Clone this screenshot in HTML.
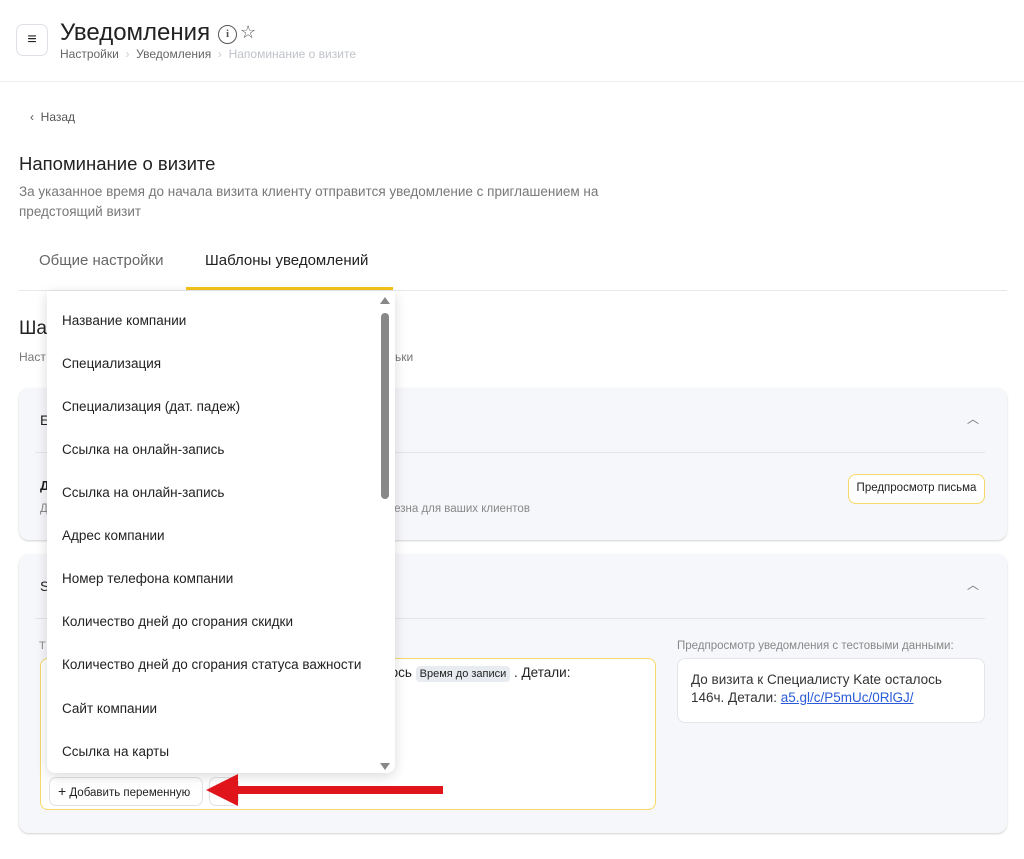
<!DOCTYPE html><html><head><meta charset="utf-8"><style>
*{box-sizing:border-box;margin:0;padding:0}
body{width:1024px;height:859px;background:#fff;font-family:"Liberation Sans",sans-serif;color:#222;position:relative;overflow:hidden}
.a{position:absolute}
.card{position:absolute;left:19px;width:988px;background:#f6f7fa;border-radius:10px;box-shadow:0 1px 2px rgba(0,0,0,.18)}
.it{position:absolute;left:62px;font-size:13.5px;color:#222}
</style></head><body>
<div class="a" style="left:16px;top:24px;width:32px;height:32px;border:1px solid #dde0e6;border-radius:7px;font-size:16px;text-align:center;line-height:29px;font-weight:bold">≡</div>
<div class="a" style="left:60px;top:19px;font-size:24px;color:#222">Уведомления</div>
<div class="a" style="left:218px;top:25px;width:19px;height:19px;border:1.5px solid #555;border-radius:50%;font-size:11px;text-align:center;line-height:16px;font-family:'Liberation Serif';font-weight:bold;color:#555">i</div>
<div class="a" style="left:240px;top:22px;font-size:18px;color:#555">☆</div>
<div class="a" style="left:60px;top:47px;font-size:12px;color:#666">Настройки &nbsp;<span style="color:#ccc">›</span>&nbsp; Уведомления &nbsp;<span style="color:#ccc">›</span>&nbsp; <span style="color:#bfc3c9">Напоминание о визите</span></div>
<div class="a" style="left:0;top:81px;width:1024px;height:1px;background:#eceef1"></div>
<div class="a" style="left:30px;top:110px;font-size:12px;color:#555">‹ &nbsp;Назад</div>
<div class="a" style="left:19px;top:153px;font-size:18.5px;color:#222">Напоминание о визите</div>
<div class="a" style="left:19px;top:182px;font-size:13.5px;color:#777;line-height:20px;width:600px">За указанное время до начала визита клиенту отправится уведомление с приглашением на предстоящий визит</div>
<div class="a" style="left:39px;top:252px;font-size:15px;color:#666">Общие настройки</div>
<div class="a" style="left:205px;top:252px;font-size:15px;color:#222">Шаблоны уведомлений</div>
<div class="a" style="left:19px;top:290px;width:988px;height:1px;background:#e6e8ec"></div>
<div class="a" style="left:186px;top:287px;width:207px;height:3px;background:#f5c518"></div>
<div class="a" style="left:19px;top:318px;font-size:19px">Ша</div>
<div class="a" style="left:19px;top:350px;font-size:12px;color:#777">Наст</div>
<div class="a" style="left:395px;top:350px;font-size:12px;color:#777">ьки</div>
<div class="card" style="top:388px;height:152px">
<div class="a" style="left:21px;top:24px;font-size:14px">Е</div>
<div class="a" style="left:948px;top:22px;font-size:12px;color:#777">︿</div>
<div class="a" style="left:16px;top:64px;width:950px;height:1px;background:#e3e5ea"></div>
<div class="a" style="left:21px;top:90px;font-size:13px;font-weight:bold">Д</div>
<div class="a" style="left:21px;top:115px;font-size:11.5px;color:#888">Д</div>
<div class="a" style="left:356px;top:115px;font-size:11.5px;color:#888">полезна для ваших клиентов</div>
<div class="a" style="left:829px;top:86px;width:137px;height:30px;border:1.5px solid #f7d766;border-radius:8px;background:#fff;font-size:11.5px;text-align:center;line-height:27px;white-space:nowrap">Предпросмотр письма</div>
</div>
<div class="card" style="top:554px;height:279px">
<div class="a" style="left:21px;top:24px;font-size:14px">S</div>
<div class="a" style="left:948px;top:22px;font-size:12px;color:#777">︿</div>
<div class="a" style="left:16px;top:64px;width:950px;height:1px;background:#e3e5ea"></div>
<div class="a" style="left:20px;top:86px;font-size:11px;color:#888">Т</div>
<div class="a" style="left:21px;top:104px;width:616px;height:152px;border:1.5px solid #f7d766;border-radius:8px;background:#fff"></div>
<div class="a" style="left:350px;top:111px;font-size:13.5px">талось <span style="background:#e8ebf0;border-radius:4px;font-size:11px;padding:2px 4px">Время до записи</span> . Детали:</div>
<div class="a" style="left:30px;top:223px;width:154px;height:29px;border:1px solid #e0e2e6;border-radius:7px;background:#fff;font-size:11.5px;line-height:27px;padding-left:8px;white-space:nowrap"><span style="font-size:14px">+</span> Добавить переменную</div>
<div class="a" style="left:190px;top:223px;width:30px;height:29px;border:1px solid #e0e2e6;border-radius:7px;background:#fff"></div>
<div class="a" style="left:658px;top:86px;font-size:11.5px;color:#888">Предпросмотр уведомления с тестовыми данными:</div>
<div class="a" style="left:658px;top:104px;width:308px;height:65px;border:1px solid #e3e5ea;border-radius:8px;background:#fff;font-size:13.5px;line-height:18px;padding:12px 13px;color:#333">До визита к Специалисту Kate осталось<br>146ч. Детали: <span style="color:#2a5bd7;text-decoration:underline">a5.gl/c/P5mUc/0RlGJ/</span></div>
</div>
<div class="a" style="left:47px;top:291px;width:348px;height:482px;background:#fff;border-radius:0 0 8px 8px;box-shadow:0 3px 12px rgba(0,0,0,.15)"></div>
<div class="a" style="left:380px;top:297px;width:0;height:0;border-left:5px solid transparent;border-right:5px solid transparent;border-bottom:7px solid #888"></div>
<div class="a" style="left:380px;top:763px;width:0;height:0;border-left:5px solid transparent;border-right:5px solid transparent;border-top:7px solid #888"></div>
<div class="a" style="left:381px;top:313px;width:8px;height:186px;background:#888;border-radius:4px"></div>
<div class="it" style="top:313px">Название компании</div>
<div class="it" style="top:356px">Специализация</div>
<div class="it" style="top:399px">Специализация (дат. падеж)</div>
<div class="it" style="top:442px">Ссылка на онлайн-запись</div>
<div class="it" style="top:485px">Ссылка на онлайн-запись</div>
<div class="it" style="top:528px">Адрес компании</div>
<div class="it" style="top:571px">Номер телефона компании</div>
<div class="it" style="top:614px">Количество дней до сгорания скидки</div>
<div class="it" style="top:657px">Количество дней до сгорания статуса важности</div>
<div class="it" style="top:701px">Сайт компании</div>
<div class="it" style="top:744px">Ссылка на карты</div>
<svg class="a" style="left:200px;top:772px" width="250" height="36"><polygon points="6,18 38,2 38,14 243,14 243,22 38,22 38,34" fill="#e0141b"/></svg>
</body></html>
